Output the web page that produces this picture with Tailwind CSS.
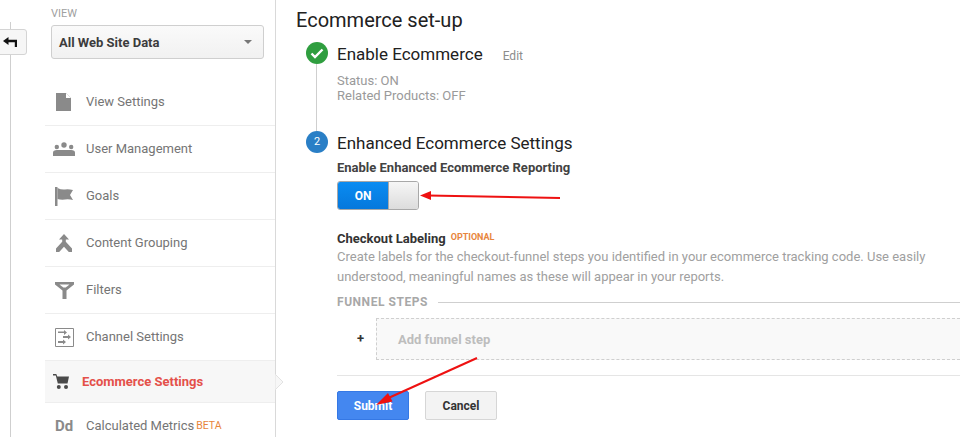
<!DOCTYPE html>
<html lang="en">
<head>
  <meta charset="UTF-8">
  <title>Ecommerce set-up</title>
  <script src="https://cdn.jsdelivr.net/npm/@tailwindcss/browser@4"></script>
</head>
<body class="bg-white font-['Roboto',sans-serif] overflow-hidden">
  <div class="relative flex w-[960px] h-[437px] overflow-hidden">

    <!-- rail with back button -->
    <div class="relative w-[45px] shrink-0">
      <div class="absolute left-[10px] top-[22px] bottom-0 w-px bg-[#cfcfcf]"></div>
      <div class="absolute left-[-4px] top-[29px] w-[31px] h-[26px] bg-[#f6f6f6] border border-[#d4d4d4] rounded-[3px] flex items-center justify-center">
        <svg width="14" height="10" viewBox="0 0 14 10" class="mr-[3px]"><path d="M0 4 5.500 0v2.700H14V10h-2.200V5.200H5.500V8z" fill="#111"/></svg>
      </div>
    </div>

    <!-- sidebar -->
    <aside class="w-[231px] shrink-0 border-r border-[#d9d9d9] h-full">
      <div class="pl-[6px] pr-[11px] h-[79px]">
        <div class="pt-[7px] text-[11px] leading-[13px] text-[#a0a0a0]">VIEW</div>
        <div class="mt-[5px] h-[34px] border border-[#cfcfcf] rounded-[3px] bg-linear-to-b from-[#fafafa] to-[#f1f1f1] flex items-center justify-between pl-[7px] pr-[11px]">
          <span class="text-[13px] font-bold text-[#3c3c3c] mt-[1px]">All Web Site Data</span>
          <span class="w-0 h-0 border-x-[4px] border-x-transparent border-t-[4px] border-t-[#777]"></span>
        </div>
      </div>

      <div class="h-[47px] flex items-center border-b border-[#eeeeee] text-[13px] text-[#757575]">
        <span class="w-[37px] mr-[4px] flex justify-center"><svg width="15" height="18" viewBox="0 0 15 18"><path d="M0 0h10l5 5v13H0z" fill="#8a8a8a"/><path d="M10 0v5h5z" fill="#fff"/></svg></span>
        <span>View Settings</span>
      </div>
      <div class="h-[47px] flex items-center border-b border-[#eeeeee] text-[13px] text-[#757575]">
        <span class="w-[38px] mr-[3px] flex justify-center"><svg width="22" height="14" viewBox="0 0 22 14"><circle cx="3.800" cy="5" r="2.200" fill="#8a8a8a"/><circle cx="11" cy="3" r="2.700" fill="#8a8a8a"/><circle cx="18.200" cy="5" r="2.200" fill="#8a8a8a"/><path d="M0 14v-3.500q0-2.500 4-2.500h14q4 0 4 2.500V14z" fill="#8a8a8a"/></svg></span>
        <span>User Management</span>
      </div>
      <div class="h-[47px] flex items-center border-b border-[#eeeeee] text-[13px] text-[#757575]">
        <span class="w-[38px] mr-[3px] flex justify-center"><svg width="18" height="19" viewBox="0 0 18 19"><path d="M0 0h2.500v19H0z" fill="#8a8a8a"/><path d="M2.500 1q4 2 7.500 1.500t8 .5l-3 5 3 5q-4-1-8-.5t-7.500-.5z" fill="#8a8a8a"/></svg></span>
        <span>Goals</span>
      </div>
      <div class="h-[47px] flex items-center border-b border-[#eeeeee] text-[13px] text-[#757575]">
        <span class="w-[38px] mr-[3px] flex justify-center"><svg width="16" height="18" viewBox="0 0 16 18"><path d="M8 0l5 5.500H9.800v2.200L16 14.500V18h-3.200l-4.800-5.200L3.200 18H0v-3.500l6.200-6.800V5.500H3z" fill="#8a8a8a"/></svg></span>
        <span>Content Grouping</span>
      </div>
      <div class="h-[47px] flex items-center border-b border-[#eeeeee] text-[13px] text-[#757575]">
        <span class="w-[38px] mr-[3px] flex justify-center"><svg width="19" height="17" viewBox="0 0 19 17"><path d="M0 0h19v2.500l-7.500 6V17h-4V8.500L0 2.500z" fill="#8a8a8a"/><path d="M4.500 2.500h10l-3.800 3H8.300z" fill="#fff"/></svg></span>
        <span>Filters</span>
      </div>
      <div class="h-[47px] flex items-center border-b border-[#eeeeee] text-[13px] text-[#757575]">
        <span class="w-[38px] mr-[3px] flex justify-center"><svg width="19" height="19" viewBox="0 0 19 19"><path d="M.5.500h18v18H.5z" fill="none" stroke="#8a8a8a"/><path d="M3 3.500h6v-1.500l3 2.500-3 2.500V5H3zM8 8h5V6.500L16 9l-3 2.500V10H8zM3 13h5v-1.500l3 2.500-3 2.500V15H3z" fill="#8a8a8a"/></svg></span>
        <span>Channel Settings</span>
      </div>
      <div class="relative h-[42px] flex items-center border-b border-[#eeeeee] bg-[#f7f7f7] text-[13px] font-bold text-[#e4504a]">
        <span class="w-[32px] mr-[5px] flex justify-center"><svg width="16" height="15" viewBox="0 0 16 15"><path d="M0 0h3.300l1 2.500H16l-1.500 7H4.800L2.800 1.500H0z" fill="#4a4a4a"/><circle cx="5.800" cy="13" r="2" fill="#4a4a4a"/><circle cx="13" cy="13" r="2" fill="#4a4a4a"/></svg></span>
        <span>Ecommerce Settings</span>
        <svg width="9" height="16" viewBox="0 0 9 16" class="absolute right-[-9px] top-[13px]"><path d="M0 0l8 8-8 8z" fill="#f7f7f7" stroke="#e2e2e2"/></svg>
      </div>
      <div class="h-[47px] flex items-start pt-[14px] text-[13px] text-[#757575]">
        <span class="w-[38px] mr-[3px] flex justify-center text-[15px] leading-[18px] font-bold text-[#8a8a8a]">Dd</span>
        <span class="leading-[18px]">Calculated Metrics</span>
        <span class="ml-[2px] text-[10.500px] leading-[18px] text-[#e8853c]">BETA</span>
      </div>
    </aside>

    <!-- content -->
    <main class="flex-1 min-w-0 pl-[20px] pt-[7px]">
      <h1 class="text-[20px] leading-[26px] text-[#212121]">Ecommerce set-up</h1>

      <div class="relative mt-[9px] ml-[10px] pl-[31px]">
        <div class="absolute left-[10px] top-[22px] h-[67px] w-px bg-[#cfcfcf]"></div>
        <div class="absolute left-0 top-0 w-[22px] h-[22px] rounded-full bg-[#2f9e3f] flex items-center justify-center">
          <svg width="14" height="11" viewBox="0 0 14 11"><path d="M1.500 5.500 5 9l7.500-7.500" fill="none" stroke="#fff" stroke-width="2.400"/></svg>
        </div>
        <div class="flex items-baseline h-[24px]">
          <span class="text-[17px] leading-[24px] text-[#212121]">Enable Ecommerce</span>
          <span class="ml-[20px] text-[12px] text-[#8c8c8c]">Edit</span>
        </div>
        <div class="mt-[7px] text-[13px] leading-[15px] text-[#9a9a9a]">
          <p>Status: ON</p>
          <p>Related Products: OFF</p>
        </div>

        <div class="absolute left-0 top-[89px] w-[22px] h-[22px] rounded-full bg-[#2a7fc6] flex items-center justify-center text-[11px] text-white">2</div>
        <div class="mt-[28px] text-[17px] leading-[24px] text-[#212121]">Enhanced Ecommerce Settings</div>
        <div class="mt-[4px] text-[13px] leading-[18px] font-bold text-[#424242]">Enable Enhanced Ecommerce Reporting</div>

        <div class="mt-[4px] flex w-[82px] h-[29px] rounded-[3px] overflow-hidden border border-[#a8a8a8]">
          <div class="w-[50px] bg-linear-to-b from-[#0a8cf2] to-[#0678dc] text-white text-[12px] font-bold flex items-center justify-center">ON</div>
          <div class="flex-1 bg-linear-to-b from-[#f6f6f6] to-[#dcdcdc] border-l border-[#a8a8a8]"></div>
        </div>

        <div class="mt-[20px] h-[17px] flex items-start">
          <span class="text-[13px] leading-[18px] font-bold text-[#333333]">Checkout Labeling</span>
          <span class="ml-[5px] mt-[1px] text-[9px] leading-[12px] font-bold text-[#e8853c]">OPTIONAL</span>
        </div>
        <p class="w-[610px] text-[13px] leading-[20px] text-[#a0a0a0]">Create labels for the checkout-funnel steps you identified in your ecommerce tracking code. Use easily understood, meaningful names as these will appear in your reports.</p>

        <div class="mt-[7px] flex items-center">
          <span class="text-[12px] leading-[16px] font-bold text-[#a8a8a8] tracking-[0.55px]">FUNNEL STEPS</span>
          <span class="ml-[10px] flex-1 h-px bg-[#cfcfcf]"></span>
        </div>

        <div class="mt-[8px] flex items-center">
          <span class="w-[39px] pl-[20px] text-[13px] font-bold text-[#333333]">+</span>
          <div class="flex-1 h-[42px] bg-[#f9f9f9] border border-dashed border-[#cfcfcf] border-r-0 flex items-center pl-[21px] pt-[1px] text-[13px] font-bold text-[#bdbdbd]">Add funnel step</div>
        </div>

        <div class="mt-[15px] h-px bg-[#e5e5e5]"></div>

        <div class="mt-[15px] flex gap-[16px]">
          <button class="w-[72px] h-[29px] bg-[#4487f0] border border-[#3578e5] rounded-[2px] text-white text-[12px] font-bold">Submit</button>
          <button class="w-[72px] h-[29px] bg-[#f3f3f3] border border-[#d6d6d6] rounded-[2px] text-[#333333] text-[12px] font-bold">Cancel</button>
        </div>
      </div>
    </main>

    <!-- annotation arrows -->
    <svg class="absolute left-0 top-0 pointer-events-none" width="960" height="437" viewBox="0 0 960 437">
      <path d="M560 198 428 195.500" stroke="#ee1111" stroke-width="2" fill="none"/>
      <path d="M420 195.500 431 191v9z" fill="#ee1111"/>
      <path d="M477 358 384 400" stroke="#ee1111" stroke-width="2" fill="none"/>
      <path d="M376 405 388 393l4.500 8.500z" fill="#ee1111"/>
    </svg>
  </div>
</body>
</html>
